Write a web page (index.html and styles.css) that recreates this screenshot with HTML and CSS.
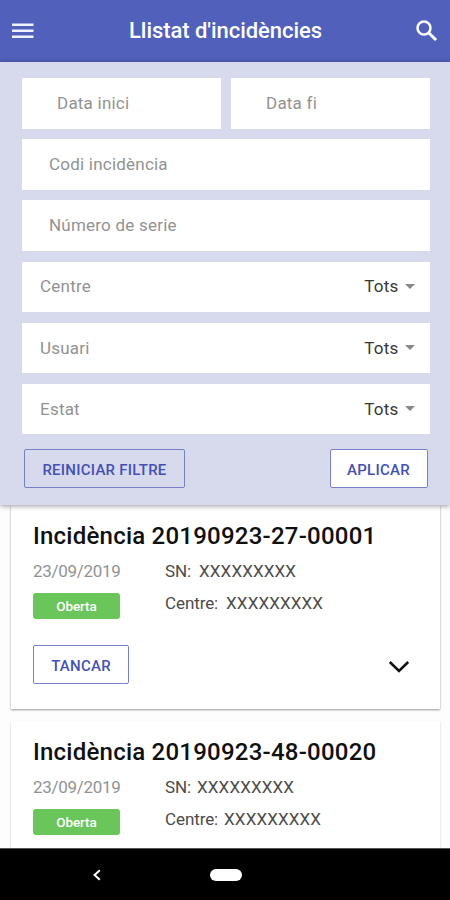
FILE: index.html
```html
<!DOCTYPE html>
<html lang="ca">
<head>
<meta charset="utf-8">
<title>Llistat d'incidències</title>
<link rel="stylesheet" href="styles.css">
</head>
<body>
<div class="app">
  <header class="topbar">
    <svg class="menu" width="22" height="16" viewBox="0 0 22 16"><path d="M0 1.8h21.5M0 7.8h21.5M0 13.8h21.5" stroke="#f1f2ff" stroke-width="2.4"/></svg>
    <h1>Llistat d'incidències</h1>
    <svg class="search" width="22" height="22" viewBox="0 0 22 22" fill="none" stroke="#fff"><circle cx="8" cy="8" r="6.5" stroke-width="2.5"/><path d="M12.7 12.7l7.3 7.3" stroke-width="3"/></svg>
  </header>
  <section class="filters">
    <div class="dates">
      <div class="field date">Data inici</div>
      <div class="field date">Data fi</div>
    </div>
    <div class="field input">Codi incidència</div>
    <div class="field input">Número de serie</div>
    <div class="field select"><span>Centre</span><span class="value">Tots</span><i class="caret"></i></div>
    <div class="field select"><span>Usuari</span><span class="value">Tots</span><i class="caret"></i></div>
    <div class="field select"><span>Estat</span><span class="value">Tots</span><i class="caret"></i></div>
    <div class="buttons">
      <button class="btn reset">REINICIAR FILTRE</button>
      <button class="btn apply">APLICAR</button>
    </div>
  </section>
  <main class="list">
    <article class="card first">
      <h2>Incidència 20190923-27-00001</h2>
      <div class="info">
        <div class="left"><span class="day">23/09/2019</span><span class="badge">Oberta</span></div>
        <dl class="right">
          <div><dt>SN:</dt><dd>XXXXXXXXX</dd></div>
          <div><dt>Centre:</dt><dd>XXXXXXXXX</dd></div>
        </dl>
      </div>
      <div class="actions">
        <button class="btn close">TANCAR</button>
        <svg width="22" height="14" viewBox="0 0 22 14" fill="none" stroke="#111" stroke-width="2.5"><path d="M1.8 2l9.2 9 9.2-9"/></svg>
      </div>
    </article>
    <article class="card second">
      <h2>Incidència 20190923-48-00020</h2>
      <div class="info">
        <div class="left"><span class="day">23/09/2019</span><span class="badge">Oberta</span></div>
        <dl class="right">
          <div><dt>SN:</dt><dd>XXXXXXXXX</dd></div>
          <div><dt>Centre:</dt><dd>XXXXXXXXX</dd></div>
        </dl>
      </div>
    </article>
  </main>
  <nav class="navbar">
    <svg width="10" height="12" viewBox="0 0 10 12" fill="none" stroke="#fff" stroke-width="2"><path d="M7.8 1.3L2.6 6l5.2 4.7"/></svg>
    <span class="home"></span>
  </nav>
</div>
</body>
</html>
```
FILE: styles.css
```css
* { box-sizing: border-box; }
body { margin: 0; font-family: Roboto, "Liberation Sans", sans-serif; background: #fdfdfd; }
.app { width: 450px; height: 900px; display: flex; flex-direction: column; overflow: hidden; }
.topbar { height: 62px; flex: none; background: #5060bb; display: flex; align-items: center; justify-content: space-between; padding: 0 12px; }
.menu { margin-bottom: 1px; }
.topbar h1 { margin: 0; padding-left: 1px; font-size: 22px; font-weight: 500; line-height: 26px; color: #fff; letter-spacing: -0.05px; }
.search { margin-bottom: 1px; }
.filters { height: 443px; flex: none; background: #d7daec; padding: 16px 20.5px 0 22px; display: flex; flex-direction: column; gap: 10.7px; box-shadow: 0 1px 5px rgba(0,0,0,.4); z-index: 1; }
.dates { display: grid; grid-template-columns: 1fr 1fr; gap: 10.5px; }
.field { height: 50.5px; background: #fff; display: flex; align-items: center; font-size: 17px; line-height: 20px; color: #929292; letter-spacing: 0.22px; padding-bottom: 1px; }
.date { padding-left: 35px; }
.input { padding-left: 27px; }
.select { padding: 0 15px 1px 18px; }
.value { margin-left: auto; color: #383838; }
.caret { margin: 0 0 0 6px; border: 5px solid transparent; border-top-color: #888; border-bottom: 0; }
.buttons { display: flex; justify-content: space-between; padding: 4px 2px 0; }
.btn { height: 39px; border: 1px solid #7880cb; border-radius: 2px; background: #fff; padding: 2px 0 0; font: 500 15px/18px Roboto, sans-serif; letter-spacing: .25px; color: #4450b5; }
.reset { width: 161px; background: transparent; }
.apply { width: 98px; }
.list { height: 343px; flex: none; overflow: hidden; padding: 0 10px 0 11px; }
.card { background: #fff; box-shadow: 0 1px 2px rgba(0,0,0,.4); padding: 17px 30px 0 22px; }
.first { height: 204px; }
.second { height: 200px; margin-top: 12px; box-shadow: 0 1px 2px rgba(0,0,0,.2); }
.card h2 { margin: 0; font-size: 24px; line-height: 28px; font-weight: 500; color: #101010; white-space: nowrap; letter-spacing: .23px; }
.info { display: flex; height: 58px; margin-top: 11px; font-size: 17px; line-height: 20px; }
.left { width: 132px; display: flex; flex-direction: column; }
.day { color: #929292; letter-spacing: -.3px; }
.badge { width: 87px; height: 26px; margin-top: 12px; border-radius: 3px; background: #6ac55b; color: #fff; font-size: 13.5px; font-weight: 500; line-height: 26px; letter-spacing: -.1px; text-align: center; }
.right { margin: 0; color: #4b4b4b; }
.right div { display: flex; margin-bottom: 12px; }
.right dt { letter-spacing: -.1px; }
.right dd { margin: 0 0 0 8px; letter-spacing: .12px; }
.second dd { margin-left: 6px; }
.actions { display: flex; justify-content: space-between; align-items: center; margin-top: 26px; }
.actions svg { margin-top: 4px; }
.close { width: 96px; }
.navbar { height: 52px; flex: none; background: #000; border-top: 1px solid #555; display: flex; align-items: center; padding-left: 92px; }
.home { width: 32px; height: 12px; margin-left: 108px; border-radius: 6px; background: #fff; }
```
